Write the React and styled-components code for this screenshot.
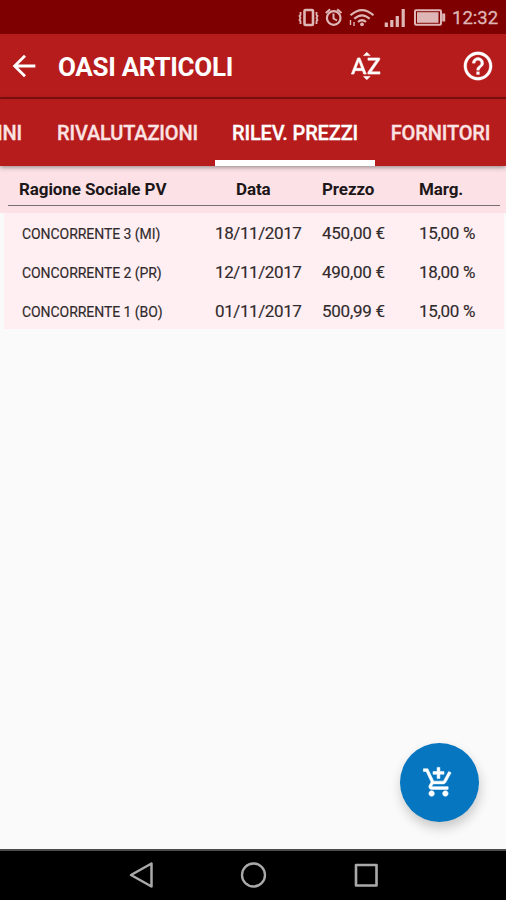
import React from "react";
import styled, { createGlobalStyle } from "styled-components";
import { MdArrowBack, MdSortByAlpha, MdHelpOutline, MdAddShoppingCart } from "react-icons/md";

const GlobalStyle = createGlobalStyle`
  * { box-sizing: border-box; }
  body { margin: 0; background: #fafafa; font-family: Roboto, sans-serif; }
`;

const Screen = styled.div`
  position: relative;
  display: flex;
  flex-direction: column;
  width: 506px;
  height: 900px;
  overflow: hidden;
  background: #fafafa;
  white-space: nowrap;
`;

const StatusBar = styled.div`
  flex: none;
  height: 34px;
  padding-right: 8px;
  display: flex;
  justify-content: flex-end;
  align-items: center;
  background: #7f0000;
  color: #dfb6b6;
`;

const Clock = styled.span`
  width: 46px;
  margin-left: 5px;
  padding-top: 2px;
  font-size: 18.5px;
  line-height: 22px;
  text-align: right;
  -webkit-text-stroke: 0.3px currentColor;
`;

const AppBar = styled.header`
  flex: none;
  height: 65px;
  padding: 0 11px 1px 7px;
  display: flex;
  align-items: center;
  background: #b71c1c;
  border-bottom: 2px solid #831010;
  color: #fff;
`;

const Title = styled.h1`
  margin: 4px 0 0 17px;
  width: 286px;
  font-size: 26px;
  line-height: 30px;
  font-weight: 700;
  letter-spacing: -0.3px;
`;

const IconButton = styled.button`
  display: flex;
  width: 34px;
  height: 34px;
  margin: 1px 0 0 ${(p) => p.$gap || 0}px;
  padding: 0;
  border: 0;
  background: none;
  color: inherit;
  font-size: 34px;

  path { stroke: currentColor; stroke-width: ${(p) => p.$weight || 0}px; }
  path[fill="none"] { stroke: none; }
`;

const Tabs = styled.nav`
  position: relative;
  z-index: 1;
  flex: none;
  display: flex;
  height: 67px;
  background: #b71c1c;
  box-shadow: 0 1px 5px rgba(0, 0, 0, 0.45);
`;

const Tab = styled.div`
  flex: none;
  width: ${(p) => p.$width}px;
  display: flex;
  justify-content: ${(p) => (p.$clipped ? "flex-end" : "center")};
  padding: 2px ${(p) => (p.$clipped ? 18 : 0)}px 0 0;
  border-bottom: 6px solid ${(p) => (p.$active ? "#fff" : "transparent")};
  color: ${(p) => (p.$active ? "#fff" : "#fbe3e3")};
  font-size: 20px;
  line-height: 65px;
  font-weight: 500;
  letter-spacing: -0.15px;
  -webkit-text-stroke: 0.3px currentColor;
`;

const HeadRow = styled.div`
  flex: none;
  height: 47px;
  padding: 0 6px 0 8px;
  background: #fce2e6;
`;

const HeadCells = styled.div`
  display: grid;
  grid-template-columns: 217px 86px 97px 1fr;
  height: 40px;
  padding: 3px 0 0 11px;
  border-bottom: 1px solid #777073;
  color: #1d1719;
  font-size: 17px;
  line-height: 41px;
  font-weight: 700;
  letter-spacing: -0.1px;
`;

const Rows = styled.div`
  flex: none;
  margin: 0 2px 0 4px;
  height: 116px;
  background: #ffeff2;
`;

const Row = styled.div`
  display: grid;
  grid-template-columns: 193px 107px 97px 1fr;
  height: 39px;
  padding-left: 18px;
  color: #302a2c;
  font-size: 17px;
  line-height: 41px;
  -webkit-text-stroke: 0.15px currentColor;
`;

const Name = styled.span`
  padding-top: 1px;
  font-size: 14px;
  letter-spacing: -0.06px;
`;

const Cell = styled.span`
  letter-spacing: ${(p) => p.$track || 0}px;
`;

const Fab = styled.button`
  position: absolute;
  right: 27px;
  bottom: 78px;
  width: 79px;
  height: 79px;
  padding: 0 2px 0 0;
  border: 0;
  border-radius: 50%;
  display: flex;
  align-items: center;
  justify-content: center;
  background: #0676c1;
  color: #fff;
  font-size: 33px;
  box-shadow: 1px 6px 12px rgba(0, 0, 0, 0.2);

  path:not([fill="none"]) { stroke: currentColor; stroke-width: 0.4px; }
`;

const NavBar = styled.footer`
  flex: none;
  display: flex;
  gap: 84px;
  align-items: center;
  height: 51px;
  margin-top: auto;
  padding: 0 0 2px 127px;
  border-top: 2px solid #4c4c4c;
  background: #000;
`;

const data = [
  ["CONCORRENTE 3 (MI)", "18/11/2017", "450,00 €", "15,00 %"],
  ["CONCORRENTE 2 (PR)", "12/11/2017", "490,00 €", "18,00 %"],
  ["CONCORRENTE 1 (BO)", "01/11/2017", "500,99 €", "15,00 %"],
];

function StatusIcons() {
  return (
    <svg width="150" height="34" viewBox="297 0 150 34" fill="none" stroke="currentColor" strokeWidth="2">
      <rect x="304.500" y="10" width="8.500" height="15" rx="1" strokeWidth="2.600" />
      <path d="M300.500 12v3l-1 1 1 2-1 2 1 1v3M316.500 12v3l1 1-1 2 1 2-1 1v3" strokeWidth="1.800" />
      <circle cx="333.700" cy="18" r="6.800" strokeWidth="2.200" />
      <path d="M333.500 13.500v5l3.500 2M325.800 13l4.300-3.800M341.500 13l-4.300-3.800" strokeWidth="2" />
      <path d="M350.500 15.300q11.500-10.500 23 0M354.300 18.800q7.700-7 15.400 0M358 22q4-3.500 8 0" strokeWidth="2.200" />
      <circle cx="362" cy="24.300" r="1.900" fill="currentColor" stroke="none" />
      <path d="M350.500 20v5M354 22v4" strokeWidth="1.400" />
      <path d="M386.300 27v-4.500M391.800 27v-7M397.300 27v-11M403.200 27v-18" strokeWidth="3.200" />
      <rect x="415" y="10.200" width="26" height="14.600" rx="1" strokeWidth="2" />
      <path d="M417 12.200h21.500v10.600h-21.500z" fill="currentColor" stroke="none" />
      <path d="M443.700 13.500v8" strokeWidth="3" />
    </svg>
  );
}

export default function App() {
  return (
    <Screen>
      <GlobalStyle />
      <StatusBar>
        <StatusIcons />
        <Clock>12:32</Clock>
      </StatusBar>
      <AppBar>
        <IconButton aria-label="Indietro"><MdArrowBack /></IconButton>
        <Title>OASI ARTICOLI</Title>
        <IconButton $gap={5} $weight={0.4} aria-label="Ordina"><MdSortByAlpha /></IconButton>
        <IconButton $gap={78} $weight={0.2} aria-label="Aiuto"><MdHelpOutline /></IconButton>
      </AppBar>
      <Tabs>
        <Tab $width={40} $clipped>INI</Tab>
        <Tab $width={175}>RIVALUTAZIONI</Tab>
        <Tab $width={160} $active>RILEV. PREZZI</Tab>
        <Tab $width={131}>FORNITORI</Tab>
      </Tabs>
      <HeadRow>
        <HeadCells>
          <span>Ragione Sociale PV</span>
          <span>Data</span>
          <span>Prezzo</span>
          <span>Marg.</span>
        </HeadCells>
      </HeadRow>
      <Rows>
        {data.map(([name, date, price, margin]) => (
          <Row key={name}>
            <Name>{name}</Name>
            <Cell $track={-0.4}>{date}</Cell>
            <Cell $track={-0.25}>{price}</Cell>
            <Cell $track={-0.3}>{margin}</Cell>
          </Row>
        ))}
      </Rows>
      <Fab aria-label="Aggiungi al carrello"><MdAddShoppingCart /></Fab>
      <NavBar>
        <svg width="28" height="30" fill="none" stroke="#aaa" strokeWidth="2.500" strokeLinejoin="round">
          <path d="M4 15 24.500 3.500v23z" />
        </svg>
        <svg width="29" height="30" fill="none" stroke="#aaa" strokeWidth="2.300">
          <circle cx="14.500" cy="15" r="11.500" />
        </svg>
        <svg width="28" height="30" fill="none" stroke="#aaa" strokeWidth="2.600" strokeLinejoin="round">
          <rect x="4" y="5" width="20.500" height="20.500" />
        </svg>
      </NavBar>
    </Screen>
  );
}
